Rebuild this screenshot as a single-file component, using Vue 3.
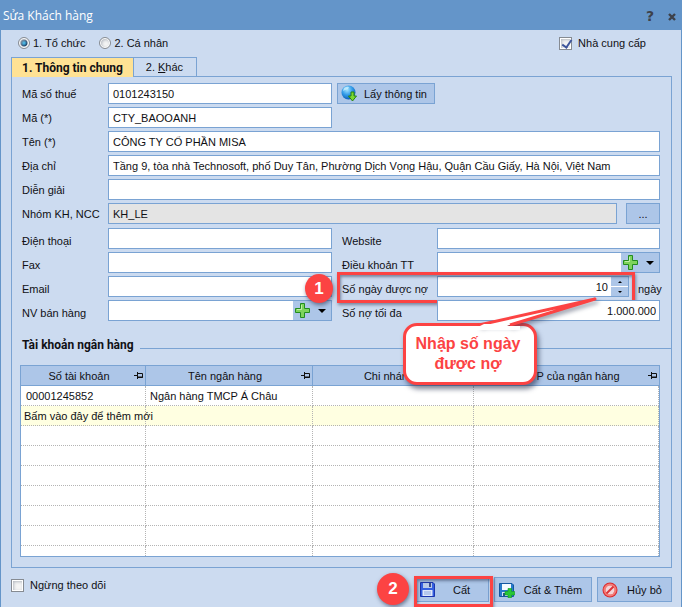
<script setup>
import { ref } from 'vue'

const kind = ref('org')
const isSupplier = ref(true)
const inactive = ref(false)
const days = ref('10')

const basics = ref([
  { id: 'name', label: 'Tên (*)', value: 'CÔNG TY CỔ PHẦN MISA' },
  { id: 'address', label: 'Địa chỉ', value: 'Tầng 9, tòa nhà Technosoft, phố Duy Tân, Phường Dịch Vọng Hậu, Quận Cầu Giấy, Hà Nội, Việt Nam' },
  { id: 'note', label: 'Diễn giải', value: '' }
])
const contacts = ref([
  { id: 'phone', label: 'Điện thoại', value: '' },
  { id: 'fax', label: 'Fax', value: '' },
  { id: 'email', label: 'Email', value: '' }
])
const columns = ['Số tài khoản', 'Tên ngân hàng', 'Chi nhánh', 'Tỉnh/TP của ngân hàng']
const accounts = [['00001245852', 'Ngân hàng TMCP Á Châu', '', '']]
const blankRows = 7
</script>

<template>
  <main class="window">
    <header class="titlebar">
      <h1>Sửa Khách hàng</h1>
      <button class="title-btn" type="button" aria-label="Trợ giúp">?</button>
      <button class="title-btn" type="button" aria-label="Đóng">
        <svg width="8" height="8" viewBox="0 0 8 8"><path d="M1 1L7 7M7 1L1 7" stroke="#3d4149" stroke-width="2.4" /></svg>
      </button>
    </header>

    <form class="content" @submit.prevent>
      <div class="kinds">
        <label><input v-model="kind" type="radio" name="kind" value="org" />1. Tổ chức</label>
        <label><input v-model="kind" type="radio" name="kind" value="person" />2. Cá nhân</label>
        <label class="supplier"><input v-model="isSupplier" type="checkbox" />Nhà cung cấp</label>
      </div>

      <nav class="tabs">
        <button class="tab active" type="button">1. Thông tin chun<u>g</u></button>
        <button class="tab" type="button">2. <u>K</u>hác</button>
      </nav>

      <section class="panel">
        <div class="fields">
          <div class="halves">
            <div class="row">
              <label for="tax">Mã số thuế</label>
              <input id="tax" class="box" type="text" value="0101243150" />
            </div>
            <button class="btn lookup" type="button">
              <svg width="17" height="17" viewBox="0 0 17 17">
                <defs>
                  <radialGradient id="globe" cx="0.4" cy="0.3" r="0.75">
                    <stop offset="0" stop-color="#a5e4ff" /><stop offset="0.5" stop-color="#339be8" /><stop offset="1" stop-color="#0957b0" />
                  </radialGradient>
                </defs>
                <circle cx="7.500" cy="7.500" r="7" fill="url(#globe)" />
                <path d="M3 3Q6 1 8 2L7 4L4 5L2 6Z" fill="#d5f5ff" opacity="0.7" />
                <path d="M10 7H13V11H15.500L11.500 16L7.500 11H10Z" fill="#7bd832" stroke="#278313" />
              </svg>
              Lấy thông tin
            </button>
          </div>
          <div class="halves">
            <div class="row">
              <label for="code">Mã (*)</label>
              <input id="code" class="box" type="text" value="CTY_BAOOANH" />
            </div>
          </div>
          <div v-for="f in basics" :key="f.id" class="row">
            <label :for="f.id">{{ f.label }}</label>
            <input :id="f.id" v-model="f.value" class="box" type="text" />
          </div>
          <div class="row group">
            <label for="group">Nhóm KH, NCC</label>
            <input id="group" class="box" type="text" value="KH_LE" readonly />
            <button class="btn more" type="button" aria-label="Chọn nhóm">...</button>
          </div>
        </div>

        <div class="fields halves details">
          <div class="stack">
            <div v-for="f in contacts" :key="f.id" class="row">
              <label :for="f.id">{{ f.label }}</label>
              <input :id="f.id" v-model="f.value" class="box" type="text" />
            </div>
            <div class="row">
              <label for="seller">NV bán hàng</label>
              <div class="combo">
                <select id="seller" class="box"><option></option></select>
                <div class="strip">
                  <button type="button" aria-label="Thêm nhân viên">
                    <svg width="15" height="15" viewBox="0 0 15 15"><path d="M5.500.5H9.500V5.500H14.500V9.500H9.500V14.500H5.500V9.500H.5V5.500H5.500Z" fill="#7ed45c" stroke="#238c20" /><path d="M6.500 2V6.500H2" fill="none" stroke="#c0efa8" /></svg>
                  </button>
                  <svg class="arrow" width="8" height="4" viewBox="0 0 8 4"><path d="M0 0H8L4 4Z" /></svg>
                </div>
              </div>
            </div>
          </div>

          <div class="stack right">
            <div class="row">
              <label for="web">Website</label>
              <input id="web" class="box" type="text" />
            </div>
            <div class="row">
              <label for="terms">Điều khoản TT</label>
              <div class="combo">
                <select id="terms" class="box"><option></option></select>
                <div class="strip">
                  <button type="button" aria-label="Thêm điều khoản">
                    <svg width="15" height="15" viewBox="0 0 15 15"><path d="M5.500.5H9.500V5.500H14.500V9.500H9.500V14.500H5.500V9.500H.5V5.500H5.500Z" fill="#7ed45c" stroke="#238c20" /><path d="M6.500 2V6.500H2" fill="none" stroke="#c0efa8" /></svg>
                  </button>
                  <svg class="arrow" width="8" height="4" viewBox="0 0 8 4"><path d="M0 0H8L4 4Z" /></svg>
                </div>
              </div>
            </div>
            <div class="row days">
              <label for="days">Số ngày được nợ</label>
              <div class="box spinner">
                <input id="days" v-model="days" type="text" />
                <div class="steps">
                  <button type="button" aria-label="Tăng"><svg width="4" height="2" viewBox="0 0 4 2"><path d="M0 2H4L2 0Z" /></svg></button>
                  <button type="button" aria-label="Giảm"><svg width="4" height="2" viewBox="0 0 4 2"><path d="M0 0H4L2 2Z" /></svg></button>
                </div>
              </div>
              <span class="unit">ngày</span>
              <div class="frame"></div>
              <span class="badge one">1</span>
              <div class="callout">
                <svg class="tail" width="140" height="36" viewBox="0 0 140 36">
                  <path class="spike" d="M19 31L135 5L50 31" fill="#fff" stroke="#fc4343" stroke-width="3" stroke-linejoin="round" />
                  <path d="M24 30H45L49 32H60V36H10V32H20Z" fill="#fff" />
                </svg>
                <p>Nhập số ngày được nợ</p>
              </div>
            </div>
            <div class="row">
              <label for="limit">Số nợ tối đa</label>
              <input id="limit" class="box number" type="text" value="1.000.000" />
            </div>
          </div>
        </div>

        <h2>Tài khoản ngân hàng</h2>

        <div class="grid">
          <table>
            <colgroup><col class="c1" /><col class="c2" /><col class="c3" /><col /></colgroup>
            <thead>
              <tr>
                <th v-for="c in columns" :key="c">
                  <div class="head">
                    <span>{{ c }}</span>
                    <svg width="10" height="7" viewBox="0 0 10 7"><path d="M0 3.500H3M3.500 0V7M3.500 1.500H8.500V5.500H3.500" fill="none" stroke="#111" /><path d="M4 5H9" stroke="#111" /></svg>
                  </div>
                </th>
              </tr>
            </thead>
            <tbody>
              <tr v-for="(a, i) in accounts" :key="i"><td v-for="(v, j) in a" :key="j">{{ v }}</td></tr>
              <tr class="new"><td>Bấm vào đây để thêm mới</td><td></td><td></td><td></td></tr>
              <tr v-for="n in blankRows" :key="'b' + n" class="blank"><td></td><td></td><td></td><td></td></tr>
            </tbody>
          </table>
        </div>
      </section>

      <footer>
        <label><input v-model="inactive" type="checkbox" />Ngừng theo dõi</label>
        <div class="save">
          <button class="btn" type="submit">
            <svg width="15" height="15" viewBox="0 0 15 15">
              <path d="M.5.5H13L14.500 2V14.500H.5Z" fill="#345fe0" stroke="#1c36ad" />
              <path d="M3 1H12V6H3Z" fill="#b8c9e8" /><path d="M9 1H11V5H9Z" fill="#3b4d8c" />
              <path d="M2.500 8H12.500V14H2.500Z" fill="#dfe8fa" /><path d="M4 10H11M4 12H11" stroke="#8ca8e0" />
            </svg>
            <span>Cất</span>
          </button>
          <div class="frame"></div>
          <span class="badge two">2</span>
        </div>
        <button class="btn add" type="button">
          <svg width="16" height="16" viewBox="0 0 16 16">
            <path d="M.5 1.500H13L14.500 3V14.500H.5Z" fill="#287bcc" stroke="#1457a0" />
            <path d="M3 2H12V8H3Z" fill="#f5faff" /><path d="M3 10H10V14H3Z" fill="#d5e5f5" /><path d="M4 11H6V14H4Z" fill="#245689" />
            <path d="M9 6.500H12.500V9.500H15.700V13H12.500V15.700H9V13H6V9.500H9Z" fill="#26c736" stroke="#129a1d" stroke-width="0.6" />
          </svg>
          <span>Cất &amp; Thêm</span>
        </button>
        <button class="btn cancel" type="button">
          <svg width="16" height="16" viewBox="0 0 16 16">
            <circle cx="8" cy="8" r="7.500" fill="#d92c30" /><circle cx="8" cy="8" r="5.500" fill="none" stroke="#f47b76" stroke-width="2" />
            <circle cx="8" cy="8" r="4.500" fill="#f4d5d8" /><path d="M4.500 11.500L11.500 4.500" stroke="#dc3438" stroke-width="2" />
          </svg>
          <span>Hủy bỏ</span>
        </button>
      </footer>
    </form>
  </main>
</template>

<style>
body {
  background: #ccdbf0;
}
</style>

<style scoped>
* {
  box-sizing: border-box;
}
.window {
  min-height: 100vh;
  overflow: hidden;
  border: solid #6495c9;
  border-width: 0 1px;
  background: #ccdbf0;
  color: #101014;
  font: 11px/16px "Liberation Sans", Arial, sans-serif;
}
button,
input,
select {
  margin: 0;
  color: inherit;
  font: inherit;
}
.titlebar {
  display: flex;
  align-items: center;
  gap: 8px;
  height: 30px;
  padding: 2px 2px 0;
  background: #6495c9;
}
h1 {
  flex: 1;
  margin: 0;
  color: #fff;
  font: 12px/16px "Open Sans", "Noto Sans", sans-serif;
}
.title-btn {
  width: 14px;
  padding: 0;
  border: 0;
  background: none;
  color: #3d4149;
  font: bold 14px/16px "DejaVu Sans", sans-serif;
}
.content {
  padding: 5px 9px 5px 10px;
}
.kinds {
  display: flex;
  gap: 14px;
  padding: 0 26px 0 7px;
}
.kinds label,
footer label {
  display: flex;
  align-items: center;
  gap: 3px;
}
.kinds .supplier,
footer label {
  gap: 6px;
}
.supplier {
  margin-left: auto;
}
input[type="radio"],
input[type="checkbox"] {
  flex: none;
  appearance: none;
  width: 12px;
  height: 12px;
  border: 1px solid #868b92;
  background: #f4f4f4;
  box-shadow: inset 0 0 0 1px #fff, inset 1px 1px 3px 1px #b6bbc2;
}
input[type="radio"] {
  border-radius: 50%;
}
input[type="radio"]:checked {
  background: radial-gradient(circle, #45b0df 0 1px, #163d66 3px, #e8edf2 4px);
}
input[type="checkbox"] {
  width: 13px;
  height: 13px;
}
input[type="checkbox"]:checked::before {
  content: "";
  display: block;
  width: 4px;
  height: 8px;
  margin: 0 0 0 4px;
  border: solid #3d559b;
  border-width: 0 2px 2px 0;
  transform: rotate(35deg);
}
.tabs {
  display: flex;
  margin-top: 6px;
}
.tab {
  height: 20px;
  margin-bottom: -1px;
  padding: 0 13px 0 12px;
  border: 1px solid #7aa3d3;
  border-left: 0;
  background: none;
}
.tab.active {
  z-index: 1;
  padding: 0 10px;
  border-left: 1px solid #7aa3d3;
  border-bottom: 0;
  background: #ffe294;
  font: bold 12px/16px Roboto, sans-serif;
}
.panel {
  padding: 6px 11px 10px 8px;
  border: 1px solid #7aa3d3;
}
.fields,
.stack {
  display: grid;
  gap: 3px;
}
.fields {
  padding-left: 2px;
}
.halves {
  display: grid;
  grid-template-columns: 310px minmax(0, 1fr);
  gap: 3px 5px;
}
.fields > .halves {
  padding: 0;
}
.details {
  gap: 10px;
  margin-top: 4px;
}
.details label,
.unit {
  padding-top: 4px;
}
.row {
  position: relative;
  display: grid;
  grid-template-columns: 86px minmax(0, 1fr);
  align-items: center;
  height: 21px;
}
.right .row {
  grid-template-columns: 95px minmax(0, 1fr);
}
.row.group {
  grid-template-columns: 86px minmax(0, 1fr) 34px;
}
.group .box {
  width: auto;
  margin-right: 9px;
  background: #e4e4e4;
}
.right .row.days {
  grid-template-columns: 95px minmax(0, 1fr) 31px;
}
.box {
  width: 100%;
  min-width: 0;
  height: 21px;
  padding: 0 4px;
  border: 1px solid #7aa3d3;
  border-radius: 0;
  outline: 0;
  background: #fff;
}
.number {
  padding-right: 3px;
  text-align: right;
}
.btn {
  display: flex;
  align-items: center;
  padding: 0;
  border: 1px solid #7aa3d3;
  background: #adc6e8;
}
.lookup {
  justify-self: start;
  gap: 6px;
  min-width: 96px;
  height: 21px;
  padding: 0 7px 0 3px;
}
.more {
  justify-content: center;
  height: 21px;
}
.combo {
  display: grid;
}
.combo > * {
  grid-area: 1 / 1;
}
.combo select {
  appearance: none;
}
.strip {
  display: flex;
  justify-self: end;
  align-items: center;
  justify-content: space-between;
  width: 38px;
  height: 19px;
  margin: 1px 1px 0 0;
  padding: 0 5px 0 2px;
  background: #adc6e8;
  pointer-events: none;
}
.strip button,
.steps button {
  display: grid;
  place-items: center;
  padding: 0;
  border: 0;
  background: none;
  pointer-events: auto;
}
.spinner {
  display: flex;
  padding: 0;
}
.spinner input {
  flex: 1;
  min-width: 0;
  padding: 0 3px;
  border: 0;
  outline: 0;
  background: none;
  text-align: right;
}
.steps {
  display: grid;
  gap: 1px;
  width: 17px;
}
.steps button {
  background: #adc6e8;
}
.unit {
  padding-left: 9px;
  white-space: nowrap;
}
.frame {
  position: absolute;
  inset: -4px 25px -6px -5px;
  border: 3px solid #fc4343;
  box-shadow: 1px 2px 3px rgb(40 50 80 / 50%), inset 1px 2px 3px rgb(40 50 80 / 50%);
  pointer-events: none;
}
.badge {
  position: absolute;
  display: grid;
  place-items: center;
  border-radius: 50%;
  background: #fc4343;
  box-shadow: 1px 2px 4px rgb(40 50 80 / 60%);
  color: #fff;
  font: bold 17px/20px "Liberation Sans", sans-serif;
}
.one {
  top: -2px;
  left: -37px;
  width: 28px;
  height: 29px;
}
.callout {
  position: absolute;
  z-index: 2;
  top: 47px;
  right: 123px;
  width: 134px;
  padding: 8px 7px 8px 3px;
  border: 3px solid #fc4343;
  border-radius: 14px;
  background: #fff;
  box-shadow: 2px 4px 5px rgb(40 50 80 / 60%);
  color: #fc4343;
  font: bold 16px/20px "Liberation Sans", sans-serif;
  text-align: center;
}
.callout p {
  position: relative;
  margin: 0;
}
.tail {
  position: absolute;
  top: -32px;
  left: 54px;
  overflow: visible;
}
.spike {
  filter: drop-shadow(2px 3px 2px rgb(40 50 80 / 45%));
}
h2 {
  display: flex;
  gap: 6px;
  margin: 16px -11px 12px 2px;
  font: bold 12px/16px Roboto, sans-serif;
}
h2::after {
  content: "";
  flex: 1;
  height: 11px;
  border-bottom: 1px solid #7aa3d3;
}
.grid {
  height: 192px;
  overflow: hidden;
  border: 1px solid #7aa3d3;
  background: #fff;
}
table {
  width: 100%;
  table-layout: fixed;
  border-spacing: 0;
}
.c1 {
  width: 125px;
}
.c2 {
  width: 167px;
}
.c3 {
  width: 161px;
}
th {
  height: 20px;
  padding: 0;
  border: solid #7aa3d3;
  border-width: 0 1px 1px 0;
  background: #adc6e8;
  font-weight: normal;
}
th:last-child {
  border-right: 0;
}
.head {
  display: flex;
  align-items: center;
  padding: 0 1px 0 3px;
  white-space: nowrap;
}
.head span {
  flex: 1;
}
td {
  height: 20px;
  padding: 0 0 0 5px;
  border: dotted #b4b4b4;
  border-width: 0 1px 1px 0;
  line-height: 16px;
  white-space: nowrap;
}
td:nth-child(2) {
  padding-left: 4px;
}
.new td {
  padding-left: 3px;
  background: #ffffe1;
}
.new td:first-child {
  position: relative;
  z-index: 1;
}
footer {
  display: flex;
  align-items: flex-start;
  gap: 5px;
  padding-top: 9px;
}
footer label {
  margin-right: auto;
}
footer .btn {
  height: 25px;
  padding-left: 4px;
}
footer .btn span {
  flex: 1;
  text-align: center;
}
.save {
  position: relative;
}
.save .btn {
  width: 74px;
}
.save .frame {
  inset: -1px -4px -5px -1px;
}
.two {
  top: -4px;
  left: -38px;
  width: 32px;
  height: 32px;
}
.add {
  width: 98px;
}
.cancel {
  width: 75px;
}
</style>
